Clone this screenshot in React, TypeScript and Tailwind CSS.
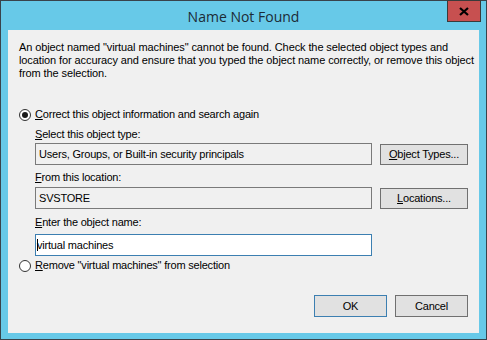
import React from "react";

const body = { fontFamily: '"Liberation Sans", Arial, sans-serif' };

function Radio({ checked }: { checked: boolean }) {
  return (
    <span className="flex h-[12px] w-[12px] shrink-0 items-center justify-center rounded-full border border-[#333333] bg-[#ffffff]">
      {checked && <span className="h-[6px] w-[6px] rounded-full bg-[#1a1a1a]" />}
    </span>
  );
}

function Btn({ children, def, w, h }: { children: React.ReactNode; def?: boolean; w: string; h: string }) {
  return (
    <div
      className={`flex items-center justify-center border bg-[#e1e1e1] text-[11px] text-black ${w} ${h} ${
        def ? "border-[#3c7fb1]" : "border-[#707070]"
      }`}
    >
      {children}
    </div>
  );
}

export default function App() {
  return (
    <div className="w-[487px] h-[340px] border border-[#39434b] bg-[#67c9e8] flex flex-col" style={body}>
      <div className="relative h-[29px] shrink-0 flex items-center justify-center">
        <span
          className="text-[14px] text-[#1c2b36] pt-[1px]"
          style={{ fontFamily: '"Open Sans", "Noto Sans", sans-serif' }}
        >
          Name Not Found
        </span>
        <div className="absolute right-[5px] top-[-1px] h-[22px] w-[34px] border border-[#3a3a3a] bg-[#c75050] flex items-center justify-center">
          <svg width="10" height="9" viewBox="0 0 10 9">
            <path d="M1 1 L9 8 M9 1 L1 8" stroke="#000" strokeWidth="2.2" />
          </svg>
        </div>
      </div>
      <div className="mx-[7px] mb-[6px] flex-1 bg-[#f0f0f0] text-[11px] leading-[13px] tracking-[-0.2px] text-black">
        <p className="pl-[11px] pr-0 pt-[11px] tracking-[-0.1px]">
          An object named "virtual machines" cannot be found. Check the selected object types and
          <br />
          location for accuracy and ensure that you typed the object name correctly, or remove this object
          <br />
          from the selection.
        </p>
        <div className="mt-[28px] ml-[11px] flex h-[13px] items-center gap-[4px]">
          <Radio checked />
          <span>
            <u>C</u>orrect this object information and search again
          </span>
        </div>
        <div className="ml-[27px] mr-[11px]">
          <div className="mt-[7px] h-[13px]">
            <u>S</u>elect this object type:
          </div>
          <div className="mt-[2px] flex items-start gap-[8px]">
            <div className="flex h-[22px] w-[337px] items-center border border-[#7a7a7a] bg-[#f0f0f0] pl-[3px]">
              Users, Groups, or Built-in security principals
            </div>
            <div className="mt-[1px]">
              <Btn w="w-[88px]" h="h-[21px]">
                <span>
                  <u>O</u>bject Types...
                </span>
              </Btn>
            </div>
          </div>
          <div className="mt-[6px] h-[13px]">
            <u>F</u>rom this location:
          </div>
          <div className="mt-[3px] flex items-start gap-[8px]">
            <div className="flex h-[22px] w-[337px] items-center border border-[#7a7a7a] bg-[#f0f0f0] pl-[3px]">
              SVSTORE
            </div>
            <div className="mt-[1px]">
              <Btn w="w-[88px]" h="h-[21px]">
                <span>
                  <u>L</u>ocations...
                </span>
              </Btn>
            </div>
          </div>
          <div className="mt-[7px] h-[13px]">
            <u>E</u>nter the object name:
          </div>
          <div className="mt-[5px] flex h-[22px] w-[337px] items-center border border-[#3c7fb1] bg-white pl-[1px]">
            <span className="inline-block h-[12px] w-px bg-black" />
            <span className="ml-[-1px]">virtual machines</span>
          </div>
        </div>
        <div className="mt-[3px] ml-[11px] flex h-[13px] items-center gap-[4px]">
          <Radio checked={false} />
          <span>
            <u>R</u>emove "virtual machines" from selection
          </span>
        </div>
        <div className="mt-[23px] mr-[11px] flex justify-end gap-[8px]">
          <Btn def w="w-[73px]" h="h-[22px]">
            OK
          </Btn>
          <Btn w="w-[73px]" h="h-[22px]">
            Cancel
          </Btn>
        </div>
      </div>
    </div>
  );
}
